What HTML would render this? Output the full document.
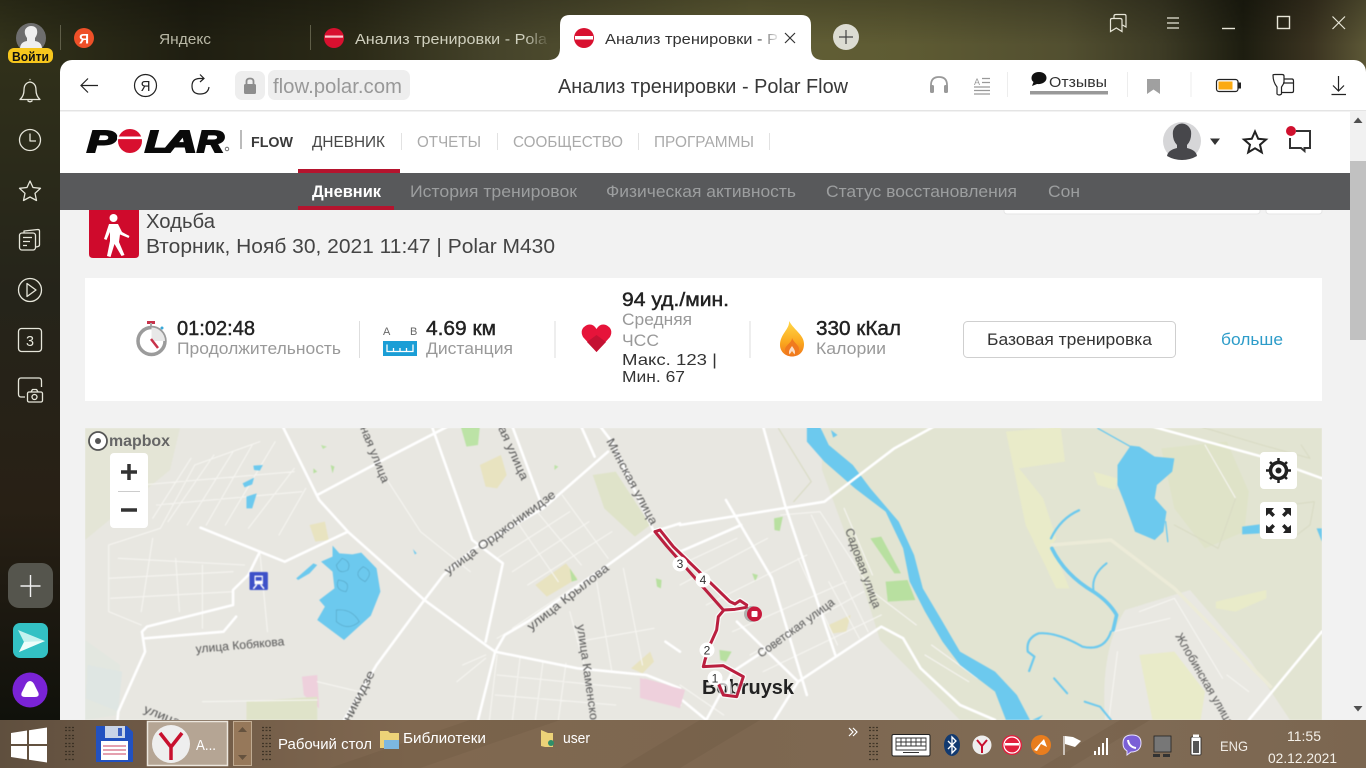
<!DOCTYPE html>
<html lang="ru"><head><meta charset="utf-8"><title>Анализ тренировки - Polar Flow</title>
<style>
html,body{margin:0;padding:0;width:1366px;height:768px;overflow:hidden;background:#222}
svg{display:block;position:absolute;left:0;top:0}
text{font-family:"Liberation Sans","Noto Sans CJK SC",sans-serif}
.ns *{vector-effect:non-scaling-stroke}
.m{stroke-width:.45px;stroke:#222;paint-order:stroke}
</style></head><body>
<svg width="1366" height="768" viewBox="0 0 1366 768" xmlns="http://www.w3.org/2000/svg">
<defs>
<linearGradient id="top" x1="0" x2="1" y1="0" y2="0">
<stop offset="0" stop-color="#33331b"/><stop offset=".14" stop-color="#1f1e11"/><stop offset=".26" stop-color="#2b2a17"/><stop offset=".36" stop-color="#45432a"/><stop offset=".55" stop-color="#625f36"/><stop offset=".66" stop-color="#5e5b33"/><stop offset=".78" stop-color="#524f30"/><stop offset=".85" stop-color="#3d3b25"/><stop offset=".91" stop-color="#1d1d10"/><stop offset=".96" stop-color="#3a3320"/><stop offset="1" stop-color="#5c5736"/>
</linearGradient>
<linearGradient id="topv" x1="0" x2="0" y1="0" y2="1"><stop offset="0" stop-color="#000" stop-opacity=".22"/><stop offset="1" stop-color="#000" stop-opacity="0"/></linearGradient>
<linearGradient id="side" x1="0" x2="0" y1="0" y2="1">
<stop offset="0" stop-color="#30301a"/><stop offset=".35" stop-color="#25241a"/><stop offset=".68" stop-color="#282015"/><stop offset="1" stop-color="#10110b"/>
</linearGradient>
<linearGradient id="task" x1="0" x2="1" y1="0" y2="0">
<stop offset="0" stop-color="#5f4f3e"/><stop offset=".1" stop-color="#6d5845"/><stop offset=".3" stop-color="#806850"/><stop offset=".55" stop-color="#7d6750"/><stop offset=".8" stop-color="#806b55"/><stop offset="1" stop-color="#7b6650"/>
</linearGradient>
<linearGradient id="f1" x1="0" x2="1"><stop offset="0" stop-color="#cfcfbd"/><stop offset=".88" stop-color="#cfcfbd"/><stop offset="1" stop-color="#cfcfbd" stop-opacity=".1"/></linearGradient>
<linearGradient id="f2" x1="0" x2="1"><stop offset="0" stop-color="#333"/><stop offset=".88" stop-color="#333"/><stop offset="1" stop-color="#333" stop-opacity=".1"/></linearGradient>
<clipPath id="mapc"><rect x="85" y="428" width="1237" height="292"/></clipPath>
<linearGradient id="flame" x1="0" x2="0" y1="0" y2="1"><stop offset="0" stop-color="#ffd84a"/><stop offset=".6" stop-color="#fba81e"/><stop offset="1" stop-color="#f0771c"/></linearGradient>
</defs>

<!-- wallpaper -->
<rect width="1366" height="768" fill="url(#top)"/>
<rect x="0" y="60" width="60" height="660" fill="url(#side)"/>
<rect x="0" y="0" width="1366" height="45" fill="url(#topv)"/>

<!-- browser body -->
<rect x="60" y="60" width="1306" height="670" rx="12" fill="#fff"/>
<rect x="60" y="110" width="1306" height="1.500" fill="#e4e4e4"/>
<rect x="60" y="210" width="1290" height="510" fill="#f2f2f2"/>

<!-- tabs -->
<g stroke="#5f5e48" stroke-width="1"><path d="M60.500 25V50M310.500 25V50"/></g>
<circle cx="84" cy="38" r="10" fill="#ee5028"/>
<text x="79" y="43.500" font-size="14" font-weight="bold" fill="#fff" textLength="10" lengthAdjust="spacingAndGlyphs">Я</text>
<text x="159" y="44" font-size="15" fill="#b9b8a6" textLength="52" lengthAdjust="spacingAndGlyphs">Яндекс</text>
<circle cx="334" cy="38" r="10" fill="#d8102f"/><rect x="325" y="35.500" width="18" height="2.200" fill="#f8c8cc"/>
<text x="355" y="44" font-size="15" fill="url(#f1)" textLength="192" lengthAdjust="spacingAndGlyphs">Анализ тренировки - Pola</text>
<path d="M548 60Q560 60 560 48V25Q560 15 570 15H801Q811 15 811 25V48Q811 60 823 60Z" fill="#fff"/>
<circle cx="584" cy="38" r="10" fill="#d8102f"/><rect x="575" y="36" width="18" height="3.500" fill="#fff"/>
<text x="605" y="44" font-size="15" fill="url(#f2)" textLength="173" lengthAdjust="spacingAndGlyphs">Анализ тренировки - Р</text>
<path d="M785 33L795 43M795 33L785 43" stroke="#333" stroke-width="1.200" fill="none"/>
<circle cx="846" cy="37" r="13" fill="#dcdcd2"/><path d="M846 30V44M839 37H853" stroke="#444" stroke-width="1.200"/>

<!-- window controls -->
<g fill="none" stroke="#e8e6d8" stroke-width="1.200">
<path d="M1110.500 31V20Q1110.500 18.500 1112 18.500H1120Q1122 18.500 1122 20V31.500L1116.300 28L1110.500 31.500Z"/>
<path d="M1114 18V16Q1114 14.500 1116 14.500H1124.500Q1126 14.500 1126 16V27L1122.500 25"/>
<path d="M1167 18H1179M1167 23H1179M1167 28H1179"/>
<path d="M1222 28.500H1235" stroke-width="1.400"/>
<rect x="1277.500" y="16.500" width="12" height="12" stroke-width="1.400"/>
<path d="M1332.500 16.500L1345 29M1345 16.500L1332.500 29"/>
</g>

<!-- profile -->
<circle cx="31" cy="38" r="15" fill="#6e6e6e"/>
<path d="M20 49Q20 42 27 41V38Q24 34 25 30Q27 26 31 26Q36 26 37 30Q38 34 35 38V41Q42 42 42 49Z" fill="#efefef"/>
<rect x="8" y="48" width="45" height="15" rx="6" fill="#f6c61d"/>
<text x="12" y="61" font-size="13" font-weight="bold" fill="#111" textLength="37" lengthAdjust="spacingAndGlyphs">Войти</text>

<!-- sidebar icons -->
<g fill="none" stroke="#e6e6da" stroke-width="1.300" stroke-linejoin="round">
<path d="M20 99.500Q24 96 24 90Q24 83 30 82Q36 83 36 90Q36 96 40 99.500Z"/><path d="M27.500 100.500Q30 103 32.500 100.500M29.500 79.500H30.500"/>
<circle cx="30" cy="140" r="10.500"/><path d="M30 133.500V141H36"/>
<path d="M30 181L33 187.500L40.500 188.300L35 193.300L36.500 200.500L30 197L23.500 200.500L25 193.300L19.500 188.300L27 187.500Z"/>
<rect x="19.500" y="233" width="16" height="17" rx="2.500"/><path d="M23 237.500H32M23 241.500H30M23 245.500H27"/><path d="M24 232.500V231L38 229.500Q39.500 229.500 39.500 231L39.500 245Q39.500 246.500 36 247"/>
<circle cx="30" cy="290" r="11.500"/><path d="M27 283.500L36 290L27 296.500Z"/>
<rect x="18.500" y="328.500" width="23" height="23" rx="3"/>
<path d="M25 397H21Q18.500 397 18.500 394V381Q18.500 378 21 378H39Q41.500 378 41.500 381V387"/>
<rect x="27.500" y="392" width="15" height="10" rx="1.500"/><circle cx="34.500" cy="397" r="2.500"/><path d="M31 392L32.500 389.500H36.500L38 392"/>
</g>
<text x="26" y="346" font-size="15" fill="#e6e6da" textLength="8" lengthAdjust="spacingAndGlyphs">3</text>
<rect x="8" y="563" width="45" height="45" rx="11" fill="#55554d"/>
<path d="M30.500 575V597M20.500 586H40.500" stroke="#f2f2f2" stroke-width="1.400"/>
<rect x="13" y="623" width="35" height="35" rx="7" fill="#33c1c4"/>
<path d="M18 630L45 641L19 652L24 642Z" fill="#c4f2ef"/><path d="M24 642L45 641L19 652Z" fill="#eefdfa"/>
<circle cx="30" cy="690" r="17.500" fill="#7a23d6"/>
<path d="M30 681Q33 681 35 686L38.500 693Q39.500 697 35 697H25Q20.500 697 21.500 693L25 686Q27 681 30 681Z" fill="#fff"/>

<!-- address bar -->
<g fill="none" stroke="#222" stroke-width="1.200">
<path d="M98 85.500H81.500M88 78.500L81 85.500L88 92.500"/>
<circle cx="145.500" cy="85.500" r="11"/>
<path d="M209 87Q208 94 200 94Q192 94 192 86Q192 79 199 78.500H204M200 74.500L204 78.500L200 82"/>
</g>
<text x="140.500" y="91" font-size="15" fill="#222" textLength="10" lengthAdjust="spacingAndGlyphs">Я</text>
<rect x="235" y="71" width="30" height="29" rx="7" fill="#eeeeee"/>
<rect x="244" y="84" width="12" height="10" rx="1.500" fill="#8d8d8d"/><path d="M246.500 85V81.500Q246.500 78.500 250 78.500Q253.500 78.500 253.500 81.500V85" fill="none" stroke="#8d8d8d" stroke-width="1.800"/>
<rect x="268" y="70" width="142" height="30" rx="7" fill="#eeeeee"/>
<text x="273" y="93" font-size="20" fill="#989898" textLength="129" lengthAdjust="spacingAndGlyphs">flow.polar.com</text>
<text x="558" y="93" font-size="20" fill="#383838" textLength="290" lengthAdjust="spacingAndGlyphs">Анализ тренировки - Polar Flow</text>
<path d="M931 90V85Q931 77 939 77Q947 77 947 85V90" fill="none" stroke="#999" stroke-width="1.800"/>
<rect x="930" y="85" width="4" height="8" rx="1.500" fill="#999"/><rect x="944" y="85" width="4" height="8" rx="1.500" fill="#999"/>
<text x="974" y="85" font-size="9" fill="#999" textLength="8">A</text>
<path d="M982 78.500H990M982 82.500H990M974 87H990M974 90.500H990M974 94H990" stroke="#999" stroke-width="1.300"/>
<path d="M1007.500 72V97M1127.500 72V97M1191 72V97" stroke="#ededed"/>
<path d="M1039 72C1044 72 1046.500 75 1046.500 78C1046.500 82 1042 84.500 1037 84L1032 86L1033.500 82C1032 81 1031.500 79.500 1031.500 78C1031.500 75 1034 72 1039 72Z" fill="#111"/>
<text x="1049" y="87" font-size="15" fill="#333" textLength="58" lengthAdjust="spacingAndGlyphs">Отзывы</text>
<rect x="1030" y="91" width="78" height="3.500" fill="#999"/>
<path d="M1147 79H1160V94L1153.500 89.500L1147 94Z" fill="#a0a0a0"/>
<rect x="1216.500" y="79.500" width="21.500" height="12" rx="2.500" fill="#fff" stroke="#222" stroke-width="1.200"/>
<rect x="1218.500" y="81.500" width="14" height="8" fill="#fbaa12"/>
<rect x="1238.500" y="82.500" width="2.500" height="6" fill="#222"/>
<g fill="none" stroke="#222" stroke-width="1.200">
<path d="M1273 75Q1273 74.500 1275 74.500H1282Q1284 74.500 1284 76V83L1281.500 87V94Q1279 96 1277 94V87Q1273 82 1273 75Z"/>
<path d="M1284 79H1292Q1293.500 79 1293.500 81V91Q1293.500 92.500 1292 92.500H1281.500M1283 83H1293.500"/>
<path d="M1338.500 76V91M1333 85.500L1338.500 91L1344 85.500M1331.500 94.500H1346"/>
</g>

<!-- polar header -->
<rect x="60" y="111.500" width="1290" height="61.500" fill="#fff"/>
<g font-weight="bold" font-style="italic" fill="#0a0a0a" stroke="#0a0a0a" stroke-width="2" font-size="31">
<text x="87" y="152" textLength="29" lengthAdjust="spacingAndGlyphs">P</text>
<text x="145" y="152" textLength="26" lengthAdjust="spacingAndGlyphs">L</text>
<text x="164" y="152" textLength="33" lengthAdjust="spacingAndGlyphs">A</text>
<text x="197" y="152" textLength="27" lengthAdjust="spacingAndGlyphs">R</text>
</g>
<circle cx="130" cy="141" r="12" fill="#d8102f"/><rect x="117" y="136.500" width="27" height="2.600" fill="#fff"/>
<circle cx="227" cy="149" r="1.800" fill="none" stroke="#555" stroke-width=".8"/>
<rect x="240" y="130" width="2" height="19" fill="#bbb"/>
<text x="251" y="147" font-size="14.500" font-weight="bold" fill="#3a3a3a" textLength="42" lengthAdjust="spacingAndGlyphs">FLOW</text>
<text x="312" y="147" font-size="16" fill="#484848" textLength="73" lengthAdjust="spacingAndGlyphs">ДНЕВНИК</text>
<g font-size="16" fill="#aaaaaa">
<text x="417" y="147" textLength="64" lengthAdjust="spacingAndGlyphs">ОТЧЕТЫ</text>
<text x="513" y="147" textLength="110" lengthAdjust="spacingAndGlyphs">СООБЩЕСТВО</text>
<text x="654" y="147" textLength="100" lengthAdjust="spacingAndGlyphs">ПРОГРАММЫ</text>
</g>
<path d="M401.500 133V150M497.500 133V150M638.500 133V150M769.500 133V150" stroke="#e2e2e2"/>
<rect x="298" y="169" width="102" height="4" fill="#b5142e"/>

<circle cx="1182" cy="141" r="19" fill="#d6d6d8"/>
<path d="M1167 156Q1168 150 1177 148V145Q1172 140 1173 131Q1175 124 1182 123.500Q1189 124 1191 131Q1192 140 1187 145V148Q1196 150 1197 156Q1190 160 1182 160Q1174 160 1167 156Z" fill="#47474b"/>
<path d="M1210 138.500H1220L1215 145Z" fill="#333"/>
<path d="M1255 131.500L1258.200 138.800L1266 139.500L1260 144.700L1261.800 152.400L1255 148.300L1248.200 152.400L1250 144.700L1244 139.500L1251.800 138.800Z" fill="none" stroke="#222" stroke-width="2"/>
<path d="M1296 131H1310V148H1304.500L1304.500 151L1301 148H1290V138" fill="none" stroke="#333" stroke-width="2"/>
<circle cx="1291" cy="131" r="5" fill="#d0102e"/>

<!-- scrollbar -->
<rect x="1350" y="111" width="16" height="620" fill="#f1f1f1"/>
<rect x="1350" y="161" width="16" height="179" fill="#c1c1c1"/>
<path d="M1353.500 123H1362.500L1358 117.500Z" fill="#505050"/>
<path d="M1353.500 706H1362.500L1358 711.500Z" fill="#505050"/>

<!-- activity header -->
<rect x="1004" y="205" width="256" height="9" rx="3" fill="#fff" stroke="#e6e6e6"/>
<rect x="1266" y="205" width="56" height="9" rx="3" fill="#fff" stroke="#e6e6e6"/>
<path d="M89 205H139V254Q139 258 135 258H93Q89 258 89 254Z" fill="#cf0a2c"/>
<g fill="#fff"><circle cx="113.500" cy="218" r="4"/>
<path d="M109 224H118L122 232L129.500 236L128.500 238L120 234.500L119 242L124.500 255L121.500 256L114.500 244L110.500 257L107 256L110 241L110 232L106.500 240L104 239Z"/></g>

<!-- sub-nav -->
<rect x="60" y="173" width="1290" height="37" fill="#58595b"/>
<text x="312" y="197" font-size="17" font-weight="bold" fill="#ffffff" textLength="69" lengthAdjust="spacingAndGlyphs">Дневник</text>
<g font-size="17" fill="#9c9e9f">
<text x="410" y="197" textLength="167" lengthAdjust="spacingAndGlyphs">История тренировок</text>
<text x="606" y="197" textLength="190" lengthAdjust="spacingAndGlyphs">Физическая активность</text>
<text x="826" y="197" textLength="191" lengthAdjust="spacingAndGlyphs">Статус восстановления</text>
<text x="1048" y="197" textLength="32" lengthAdjust="spacingAndGlyphs">Сон</text>
</g>
<rect x="298" y="206" width="96" height="4" fill="#b5142e"/>

<text x="146" y="228" font-size="20" fill="#444" textLength="69" lengthAdjust="spacingAndGlyphs">Ходьба</text>
<text x="146" y="253" font-size="20" fill="#444" textLength="409" lengthAdjust="spacingAndGlyphs">Вторник, Нояб 30, 2021 11:47 | Polar M430</text>

<!-- summary card -->
<rect x="85" y="278" width="1237" height="123" fill="#fff"/>
<rect x="147" y="321" width="8" height="3" fill="#c8324a"/><rect x="150" y="323" width="2" height="4" fill="#aaa"/>
<circle cx="151.500" cy="341" r="13.500" fill="#fff" stroke="#9b9b9b" stroke-width="3.500"/>
<path d="M151.500 327.500A13.500 13.500 0 0 1 165 341L151.500 341Z" fill="#e8e8e8"/>
<path d="M151 339L158 348" stroke="#c8324a" stroke-width="2.500"/><circle cx="162" cy="328" r="1.500" fill="#39a9d9"/>
<text class="m" x="177" y="335" font-size="20" fill="#222" textLength="78" lengthAdjust="spacingAndGlyphs">01:02:48</text>
<text x="177" y="354" font-size="17" fill="#999" textLength="164" lengthAdjust="spacingAndGlyphs">Продолжительность</text>
<path d="M359.500 321V358M555 321V358M750 321V358" stroke="#dedede"/>
<text x="383" y="335" font-size="11" fill="#666" textLength="8">A</text>
<text x="410" y="335" font-size="11" fill="#666" textLength="8">B</text>
<rect x="383" y="341" width="34" height="15" fill="#1b9ed6"/>
<path d="M387 344.500V351.500H413V344.500M393.500 348V351.500M400 348V351.500M406.500 348V351.500" fill="none" stroke="#fff" stroke-width="1.300"/>
<text class="m" x="426" y="335" font-size="20" fill="#222" textLength="70" lengthAdjust="spacingAndGlyphs">4.69 км</text>
<text x="426" y="354" font-size="17" fill="#999" textLength="87" lengthAdjust="spacingAndGlyphs">Дистанция</text>
<path d="M596.500 352L583 337Q579 329 587 325Q593 323 596.500 329Q600 323 606 325Q614 329 610 337Z" fill="#e6143a"/>
<path d="M596.500 352L587 342L596.500 335L606 342Z" fill="#c41233"/>
<text class="m" x="622" y="306" font-size="19" fill="#222" textLength="107" lengthAdjust="spacingAndGlyphs">94 уд./мин.</text>
<text x="622" y="325" font-size="17" fill="#999" textLength="70" lengthAdjust="spacingAndGlyphs">Средняя</text>
<text x="622" y="346" font-size="17" fill="#999" textLength="37" lengthAdjust="spacingAndGlyphs">ЧСС</text>
<text x="622" y="365" font-size="16" fill="#333" textLength="95" lengthAdjust="spacingAndGlyphs">Макс. 123  |</text>
<text x="622" y="382" font-size="16" fill="#333" textLength="63" lengthAdjust="spacingAndGlyphs">Мин. 67</text>
<path d="M789 321C790 329 780 334 780 345C780 352 786 356.500 792 356.500C799 356.500 804 352 804 344C804 335 795 331 789 321Z" fill="url(#flame)"/>
<path d="M792 338C792 343 785 345 785 350C785 354 788 356 790 356L792 351L794 356C797 355 799 353 799 349C799 345 794 343 792 338Z" fill="#f07a1e"/>
<path d="M792 346C790 349 788 351 789.500 354.500L792 351L794.500 354.500C796 351 794 349 792 346Z" fill="#fff" opacity=".75"/>
<text class="m" x="816" y="335" font-size="20" fill="#222" textLength="85" lengthAdjust="spacingAndGlyphs">330 кКал</text>
<text x="816" y="354" font-size="17" fill="#999" textLength="70" lengthAdjust="spacingAndGlyphs">Калории</text>
<rect x="963.500" y="321.500" width="212" height="36" rx="4" fill="#fff" stroke="#cfcfcf"/>
<text x="987" y="345" font-size="17" fill="#333" textLength="165" lengthAdjust="spacingAndGlyphs">Базовая тренировка</text>
<text x="1221" y="345" font-size="17" fill="#2d9cc9" textLength="62" lengthAdjust="spacingAndGlyphs">больше</text>

<!-- MAP -->
<g clip-path="url(#mapc)">
<g style="filter:blur(.5px)">
<rect x="85" y="428" width="1237" height="292" fill="#e8e7e1"/>
<path d="M822 428H1322V720H1040L960 720L880 640L855 560L822 470Z" fill="#e2e4d2"/>
<path d="M1125 610L1190 590L1250 660L1290 720H1105Q1100 650 1125 610Z" fill="#e9e8e2"/>
<path d="M85 428H180L170 470L85 540Z" fill="#e4e5d6"/>
<path d="M85 640L120 665L118 715L85 720Z" fill="#e3e7e0"/>
<g class="ns" transform="translate(80 425) scale(.38265 .33333)" fill="none" stroke-linecap="round" stroke-linejoin="round">
 <path d="M1340 150L1400 140L1490 300L1450 335L1370 250Z" fill="#dfe3c9"/>
 <path d="M1045 120L1100 90L1115 150L1090 190L1060 185Z" fill="#e8e3c0"/>
 <path d="M995 5H1045L1040 60L1010 65Z" fill="#bce3a6"/>
 <path d="M1190 480L1270 415L1300 460L1220 515Z" fill="#e8e3c0"/>
 <path d="M600 300L640 290L650 345L615 350Z" fill="#e8e3c0"/>
 <path d="M1440 730L1490 680L1500 710L1470 745Z" fill="#e8e3c0"/>
 <path d="M1475 760L1568 790V850L1470 810Z" fill="#eed0dc"/>
 <path d="M580 755L620 750L625 850L585 810Z" fill="#eed0dc"/>
 <path d="M435 830L620 815V885H435Z" fill="#dfe3c9"/>
 <path d="M20 720L110 740L100 860L15 820Z" fill="#dfe6e3"/>
 <path d="M1280 430L1300 465L1285 470Z M1505 460L1520 465L1518 490L1508 485Z M655 120L665 125L660 145Z M610 130L620 140L610 145Z" fill="#b8e0a0"/>
 <path d="M630 60L645 65L635 72Z M1240 120L1250 125 1240 135Z" fill="#bce3a6"/>
 <g stroke="#f6f5f1" stroke-width="1.100">
 <path d="M75 360L75 560L160 600M75 360L210 310L300 120L470 50M190 280L290 100M230 290L350 90M280 300L400 80M330 300L450 60M380 300L510 50M440 310L560 130M520 330L590 190M160 180L560 140M200 240L580 200M190 340L160 560M250 400L260 560M320 420L320 610M75 460L400 440M80 520L400 500M100 400L430 420M470 380L490 620M1090 400L1280 260M1130 440L1330 290M1170 480L1390 320M1130 270L1250 470M1180 240L1310 420M1260 210L1380 400M1090 690L1070 885M1150 700L1130 885M1210 710L1190 885M1270 715L1250 885M1090 750L1440 790M1085 810L1400 840M1090 640L1300 500M1130 610L1350 440M1280 560L1320 730M1350 470L1390 740M1420 430L1470 720M1300 650L1500 610M320 830L620 825M620 770L730 800M800 160L890 320L1020 440M1000 720L1060 690M985 770L1060 700"/>
 </g>
 <path d="M660 362L678 385L712 388L735 383L775 430L785 500L760 572L690 645L620 585L640 545L625 525L665 490L660 440L630 410L660 395Z" fill="#6cc9ee"/>
 <path d="M685 400Q710 410 700 435Q675 450 670 420ZM740 425Q770 440 745 470Q710 450 740 425ZM675 465Q710 470 695 500Q665 495 675 465ZM670 555Q710 550 730 590Q700 620 670 590Z" stroke="#58a8c8" stroke-width=".7"/>
 <path d="M565 460L610 415L620 420L600 445L570 465Z M435 215L462 205L450 250L435 250Z M425 175L455 158L450 178L430 187Z M453 122L478 120L470 137L455 135Z M870 372L880 385L875 388Z" fill="#6cc9ee"/>
 <g stroke="#ffffff" stroke-width="2.600">
 <path d="M530 5L625 225L700 320L900 525L1060 660L1085 680L1300 730L1480 750L1568 790"/>
 <path d="M620 210L800 100L960 5"/>
 <path d="M920 5L1025 345L1105 415L1060 650"/>
 <path d="M690 885L775 720L900 525L950 450L1030 370L1210 250L1380 80"/>
 <path d="M1310 5L1345 95"/><path d="M1130 5L1190 190L1210 250"/>
 <path d="M1360 5L1390 50L1500 320"/>
 <path d="M1040 885L1085 680L1110 630L1170 590L1380 420L1500 320L1568 295"/>
 <path d="M315 308L470 380L535 410L700 320"/>
 <path d="M470 380L440 450L400 495L400 540L175 605L162 620L170 680L100 860L98 885"/>
 <path d="M170 640L375 620L408 575"/>
 <path d="M1530 650L1568 680M1480 800L1568 840"/>
 </g>
 <rect x="443" y="441" width="48" height="54" rx="3" fill="#3d50c8"/>
 <path d="M456 452H478V478H456Z" fill="#fff"/><path d="M458 470H476M461 480L454 490M473 480L480 490" stroke="#fff" stroke-width="1.500"/><path d="M459 456H475V467H459Z" fill="#3d50c8"/>
</g>
<g class="ns" transform="translate(680 425) scale(.4375 .33333)" fill="none" stroke-linecap="round" stroke-linejoin="round">
 <path d="M745 20L870 5L880 110L775 130L830 220L860 340L850 360L890 490L860 490L790 300Z" fill="#e9ebc9"/>
 <path d="M945 140L1000 160L995 195L955 180Z M1225 530L1340 495L1340 520L1270 560L1225 550Z" fill="#e9ebc9"/>
 <path d="M1050 690L1130 680L1200 800L1190 885H1080Z" fill="#e9ebc9"/>
 <path d="M1100 70L1250 50L1300 200L1290 320L1200 370L1130 250Z" fill="#dfe3c8"/>
 <path d="M850 360L985 345L1130 490L1350 785" stroke="#ecebd8" stroke-width="3.500"/>
 <path d="M435 340L460 335L505 445L490 445Z M470 470L520 465L538 525L475 530Z M215 280L235 275L228 318L216 315Z M165 445L178 450L172 470Z M90 675L118 680L105 710L92 705Z" fill="#b8e0a0"/>
 <path d="M340 600L390 570L380 620L350 625Z" fill="#e8e3c0"/>
 <g stroke="#f6f5f1" stroke-width="1.100">
 <path d="M0 480L200 340M0 420L130 340M60 540L290 390M120 620L380 470M160 690L420 500M190 740L460 570M230 270L320 260L440 500L540 600M300 270L430 620M375 250L440 450M270 400L360 660M340 470L410 640M0 780L100 870M560 690L660 770M575 660L680 760M1000 680L980 885M1050 560L1130 520L1240 760M990 620L1120 580M1250 750L1300 800M1200 60L1270 220"/>
 <path d="M225 10L300 170L260 230M1190 5L1330 60L1440 100L1420 60" stroke="#d9dbc4"/>
 <path d="M1130 300L1230 370L1270 220M1330 250L1450 230L1440 300L1400 340" stroke="#d9dbc4"/>
 </g>
 <path d="M290 5H320L340 60L395 120L435 190L500 290L535 390L555 490L600 590L640 680L720 740L770 810L800 885H745L720 800L640 720L600 650L560 560L525 470L510 370L470 260L400 190L330 110L290 50Z" fill="#6cc9ee"/>
 <path d="M345 15L360 30L350 38Z M805 885L830 870L820 885Z" fill="#6cc9ee"/>
 <path d="M1030 62L1050 65L1085 95L1130 100L1125 140L1090 180L1085 220L1112 260L1105 320L1085 345L1040 320L1015 230L1000 180L1000 120Z" fill="#6cc9ee"/>
 <path d="M955 10L1030 65M1110 290L1115 350" stroke="#6cc9ee" stroke-width="1.300"/>
 <path d="M848 340Q870 280 912 256" stroke="#6cc9ee" stroke-width="2.300"/>
 <path d="M850 370Q880 450 945 500Q980 530 998 570L990 615" stroke="#6cc9ee" stroke-width="3.600"/>
 <path d="M945 495Q940 450 975 415" stroke="#6cc9ee" stroke-width="2"/>
 <path d="M985 620Q970 680 920 665Q860 620 820 625Q790 640 795 680L810 695L798 738" stroke="#6cc9ee" stroke-width="2.200"/>
 <path d="M855 760L885 805M925 830L960 845L985 885" stroke="#6cc9ee" stroke-width="2"/>
 <path d="M1285 305L1325 298L1325 325L1285 328Z M1455 310L1467 310L1467 350Z" fill="#6cc9ee"/>
 <g stroke="#ffffff" stroke-width="2.600">
 <path d="M0 300L330 230L400 160L490 70L580 5"/>
 <path d="M1080 5L1330 95L1467 160"/>
 <path d="M190 5L240 240L355 690"/>
 <path d="M105 225L210 460L290 810"/>
 <path d="M0 380L140 300"/>
 <path d="M130 590L270 770"/>
 <path d="M215 885L270 770L460 605L510 640L550 730L640 840L720 885"/>
 <path d="M1300 885L1467 620"/>
 <path d="M60 885L120 740L190 680M0 820L60 885"/>
 </g>
</g>
<path d="M640 678L685 690L680 708L640 698Z" fill="#eed0dc"/>
<g font-size="12" fill="#555">
<text transform="translate(606 441) rotate(62)" textLength="96" lengthAdjust="spacingAndGlyphs">Минская улица</text>
<text transform="translate(448 575) rotate(-36)" textLength="134" lengthAdjust="spacingAndGlyphs">улица Орджоникидзе</text>
<text transform="translate(531 631) rotate(-38)" textLength="100" lengthAdjust="spacingAndGlyphs">улица Крылова</text>
<text transform="translate(196 653) rotate(-5)" textLength="89" lengthAdjust="spacingAndGlyphs">улица Кобякова</text>
<text transform="translate(577 625) rotate(82)" textLength="108" lengthAdjust="spacingAndGlyphs">улица Каменского</text>
<text transform="translate(346 730) rotate(-63)" textLength="64" lengthAdjust="spacingAndGlyphs">оникидзе</text>
<text transform="translate(143 712) rotate(22)" textLength="38" lengthAdjust="spacingAndGlyphs">улица</text>
<text transform="translate(360 428) rotate(68)" textLength="60" lengthAdjust="spacingAndGlyphs">ная улица</text>
<text transform="translate(498 428) rotate(66)" textLength="58" lengthAdjust="spacingAndGlyphs">ая улица</text>
<text transform="translate(845 530) rotate(70)" textLength="84" lengthAdjust="spacingAndGlyphs">Садовая улица</text>
<text transform="translate(761 658) rotate(-36)" textLength="92" lengthAdjust="spacingAndGlyphs">Советская улица</text>
<text transform="translate(1175 636) rotate(60)" textLength="105" lengthAdjust="spacingAndGlyphs">Жлобинская улица</text>
</g>
</g>
<!-- route -->
<text x="702" y="694" font-size="20" font-weight="bold" fill="#222" textLength="92" lengthAdjust="spacingAndGlyphs">Bobruysk</text>
<g transform="translate(640 520) scale(.33333)" fill="none" stroke-linejoin="round" stroke-linecap="round">
 <g stroke="#fff" stroke-width="17" opacity=".7">
 <path d="M45 35L60 30L100 80L270 245L285 252L300 242L320 255L315 265L285 268L250 272L235 290L230 330L212 370L195 420L190 440L250 437L310 470L290 530L250 525L235 490L265 490L268 515"/>
 </g>
 <g stroke="#ba1f3f" stroke-width="9">
 <path d="M45 35L60 30L100 80L270 245L285 252L300 242L320 255"/>
 <path d="M45 35L80 78L250 270L285 268L320 262"/>
 <path d="M250 272L235 290L230 330L212 370L195 420L190 440L250 437L310 470L290 530L250 525L235 490"/>
 </g>
</g>
<circle cx="752" cy="614" r="8" fill="#9a9a9a" opacity=".7"/>
<circle cx="754.500" cy="614" r="7.500" fill="#c8193c"/><rect x="751.500" y="611" width="6" height="6" rx="1" fill="#fff"/>
<g font-size="12" fill="#333" text-anchor="middle">
<circle cx="680" cy="564" r="7.500" fill="#fff"/><text x="680" y="568">3</text>
<circle cx="703" cy="580" r="7.500" fill="#fff"/><text x="703" y="584">4</text>
<circle cx="707" cy="650" r="7.500" fill="#fff"/><text x="707" y="654.500">2</text>
<circle cx="715" cy="678" r="7.500" fill="#fff"/><text x="715" y="682.500">1</text>
</g>
<!-- mapbox logo -->
<circle cx="98" cy="441" r="9" fill="#fff" stroke="#555" stroke-width="1.800"/><circle cx="98" cy="441" r="3" fill="#555"/>
<text x="109" y="446" font-size="16" font-weight="bold" fill="#666" textLength="61" lengthAdjust="spacingAndGlyphs">mapbox</text>
<!-- controls -->
<rect x="110" y="453" width="38" height="75" rx="4" fill="#fff"/>
<path d="M129 464V480M121 472H137M121 510H137" stroke="#333" stroke-width="3.500"/>
<rect x="118" y="491" width="22" height="1" fill="#ccc"/>
<rect x="1260" y="452" width="37" height="37" rx="4" fill="#fff"/>
<circle cx="1278.500" cy="470.500" r="8" fill="none" stroke="#222" stroke-width="3.500"/><circle cx="1278.500" cy="470.500" r="3" fill="#222"/>
<path d="M1278.500 458V462M1278.500 479V483M1266 470.500H1270M1287 470.500H1291M1270 462L1273 465M1287 462L1284 465M1270 479L1273 476M1287 479L1284 476" stroke="#222" stroke-width="2.500"/>
<rect x="1260" y="502" width="37" height="37" rx="4" fill="#fff"/>
<g fill="#222"><path d="M1266 508H1274L1271.500 511L1275 514.500L1272.500 517L1269 513.500L1266 516Z"/><path d="M1291 508H1283L1285.500 511L1282 514.500L1284.500 517L1288 513.500L1291 516Z"/><path d="M1266 533H1274L1271.500 530L1275 526.500L1272.500 524L1269 527.500L1266 525Z"/><path d="M1291 533H1283L1285.500 530L1282 526.500L1284.500 524L1288 527.500L1291 525Z"/></g>
</g>

<!-- taskbar -->
<rect x="0" y="720" width="1366" height="48" fill="url(#task)"/>
<path d="M330 768L470 720H560L420 768ZM620 768L700 720H760L680 768ZM1040 768L1120 720H1150L1070 768Z" fill="#5f4c3a" opacity=".18"/>
<g fill="#fff"><path d="M11 733L27 730.500V744H11ZM29 730.200L47 727.500V744H29ZM11 746H27V759.500L11 757ZM29 746H47V762.500L29 759.800Z"/></g>
<path d="M65 727.500h9M65 730.500h9M65 735.500h9M65 738.500h9M65 743.500h9M65 746.500h9M65 751.500h9M65 754.500h9M65 759.500h9M262 727.500h9M262 730.500h9M262 735.500h9M262 738.500h9M262 743.500h9M262 746.500h9M262 751.500h9M262 754.500h9M262 759.500h9M869 727.500h9M869 730.500h9M869 735.500h9M869 738.500h9M869 743.500h9M869 746.500h9M869 751.500h9M869 754.500h9M869 759.500h9" stroke="#2e251b" stroke-width="1.300" stroke-dasharray="2 1.500" opacity=".75" fill="none"/>
<path d="M96 726H127L133 732V762H96Z" fill="#2251c0"/><rect x="105" y="726" width="20" height="12" fill="#c9d4e8"/><rect x="118" y="728" width="4" height="8" fill="#3a5fc0"/>
<rect x="101" y="741" width="27" height="19" fill="#fff"/><path d="M103 746H126M103 750H126M103 754H126" stroke="#c9415f"/>
<rect x="147.500" y="721.500" width="80" height="44" fill="#b5a594" stroke="#ece6dd" stroke-width="1.500"/>
<circle cx="171" cy="744" r="19" fill="#eeeeee"/>
<path d="M160 733L171 747M182 733L171 747V760" fill="none" stroke="#c8102e" stroke-width="3.500"/>
<text x="196" y="750" font-size="15" fill="#fff" textLength="20" lengthAdjust="spacingAndGlyphs">А...</text>
<rect x="233.500" y="721.500" width="18" height="44" fill="#96785a" stroke="#c0ab92"/>
<path d="M238 732H247L242.500 727ZM238 755H247L242.500 760Z" fill="#65523e"/>
<text x="278" y="749" font-size="15" fill="#fff" textLength="94" lengthAdjust="spacingAndGlyphs">Рабочий стол</text>
<path d="M380 731H388L390 733H399V748H380Z" fill="#ecd278"/><rect x="384" y="740" width="15" height="9" fill="#7cb7e0"/>
<text x="403" y="743" font-size="15" fill="#fff" textLength="83" lengthAdjust="spacingAndGlyphs">Библиотеки</text>
<path d="M541 730L548 733H553V747L545 747L541 746Z" fill="#ecd278"/><circle cx="551" cy="743" r="3" fill="#2f8f6a"/>
<text x="563" y="743" font-size="15" fill="#fff" textLength="27" lengthAdjust="spacingAndGlyphs">user</text>
<!-- tray -->
<path d="M849 728L853 732L849 736M853 728L857 732L853 736" fill="none" stroke="#fff" stroke-width="1.200"/>
<rect x="892" y="734.500" width="38" height="21.500" rx="1.500" fill="#fff" stroke="#222"/>
<path d="M896 738H926V750H896ZM896 742H926M896 746H926M901 738V746M906 738V746M911 738V746M916 738V746M921 738V746M903 752.500H919" fill="none" stroke="#333" stroke-width=".9"/>
<ellipse cx="952" cy="745" rx="8" ry="11" fill="#123a70"/>
<path d="M948 741L956 749L952 753V737L956 741L948 749" fill="none" stroke="#fff" stroke-width="1.300"/>
<circle cx="982" cy="745" r="9.500" fill="#eee"/><path d="M977 740L982 746L987 740M982 746V753" fill="none" stroke="#c8102e" stroke-width="2"/>
<circle cx="1012" cy="745" r="10" fill="#e21f3d"/><rect x="1005" y="743" width="14" height="2.500" fill="#fff"/><circle cx="1012" cy="745" r="8" fill="none" stroke="#fff" stroke-width="1.200"/>
<circle cx="1041" cy="745" r="10" fill="#e87d1e"/><path d="M1034 750L1044 739L1047 747L1041 744L1037 751Z" fill="#fff"/>
<path d="M1064 736V755" stroke="#fff" stroke-width="1.200"/><path d="M1065 736L1073 737L1081 741L1075 747L1065 744Z" fill="#fff"/>
<g fill="#fff"><rect x="1094" y="751" width="2" height="4"/><rect x="1098" y="747" width="2" height="8"/><rect x="1102" y="743" width="2" height="12"/><rect x="1106" y="738" width="2" height="17"/></g>
<path d="M1132 735C1138 735 1141 738 1141 743C1141 749 1137 752 1131 752L1127 755V751C1124 749 1123 747 1123 743C1123 738 1126 735 1132 735Z" fill="#7b5fd6" stroke="#e7e0ff"/>
<path d="M1128 740Q1129 747 1136 748" fill="none" stroke="#fff" stroke-width="2"/>
<rect x="1154" y="736" width="17" height="16" fill="#777" stroke="#222" stroke-width=".8"/><rect x="1153" y="754" width="7" height="3" fill="#333"/><rect x="1163" y="754" width="7" height="3" fill="#333"/>
<rect x="1191" y="737" width="10" height="18" rx="1" fill="#fff" stroke="#222" stroke-width=".8"/><rect x="1193" y="734.500" width="6" height="2.500" fill="#fff"/><rect x="1193" y="741" width="6" height="12" fill="#555"/>
<text x="1220" y="751" font-size="14" fill="#f1ece6" textLength="28" lengthAdjust="spacingAndGlyphs">ENG</text>
<text x="1287" y="741" font-size="14" fill="#f5f1ea" textLength="34" lengthAdjust="spacingAndGlyphs">11:55</text>
<text x="1268" y="763" font-size="14" fill="#f5f1ea" textLength="69" lengthAdjust="spacingAndGlyphs">02.12.2021</text>
</svg>
</body></html>
